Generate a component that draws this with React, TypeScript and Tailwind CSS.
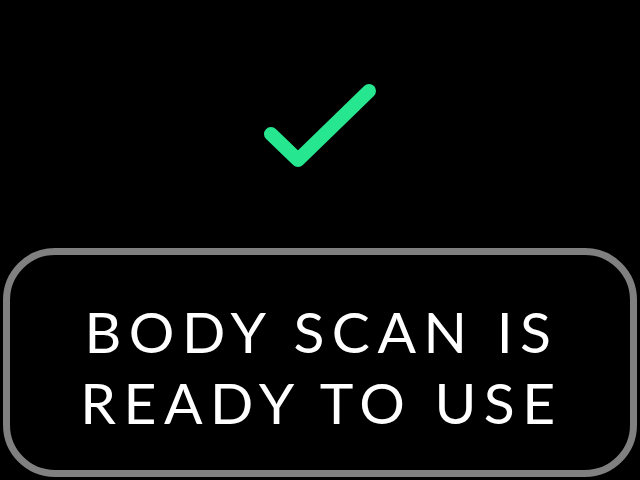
export default function App() {
  return (
    <div className="w-[640px] h-[480px] bg-black flex flex-col items-center overflow-hidden">
      <svg width="640" height="248" viewBox="0 0 640 248" className="shrink-0">
        <polyline points="271,134 298,160 369,91" fill="none" stroke="#26e68f" strokeWidth="14" strokeLinecap="round" strokeLinejoin="round" />
      </svg>
      <div className="w-[634px] h-[229px] border-[7px] border-[#808080] rounded-[52px] flex items-center justify-center">
        <p className="text-white text-center text-[57px] leading-[71px] tracking-[7.5px] font-['Lato',sans-serif] pt-[9px] pl-[3px]">
          BODY SCAN IS<br />READY TO USE
        </p>
      </div>
    </div>
  );
}
